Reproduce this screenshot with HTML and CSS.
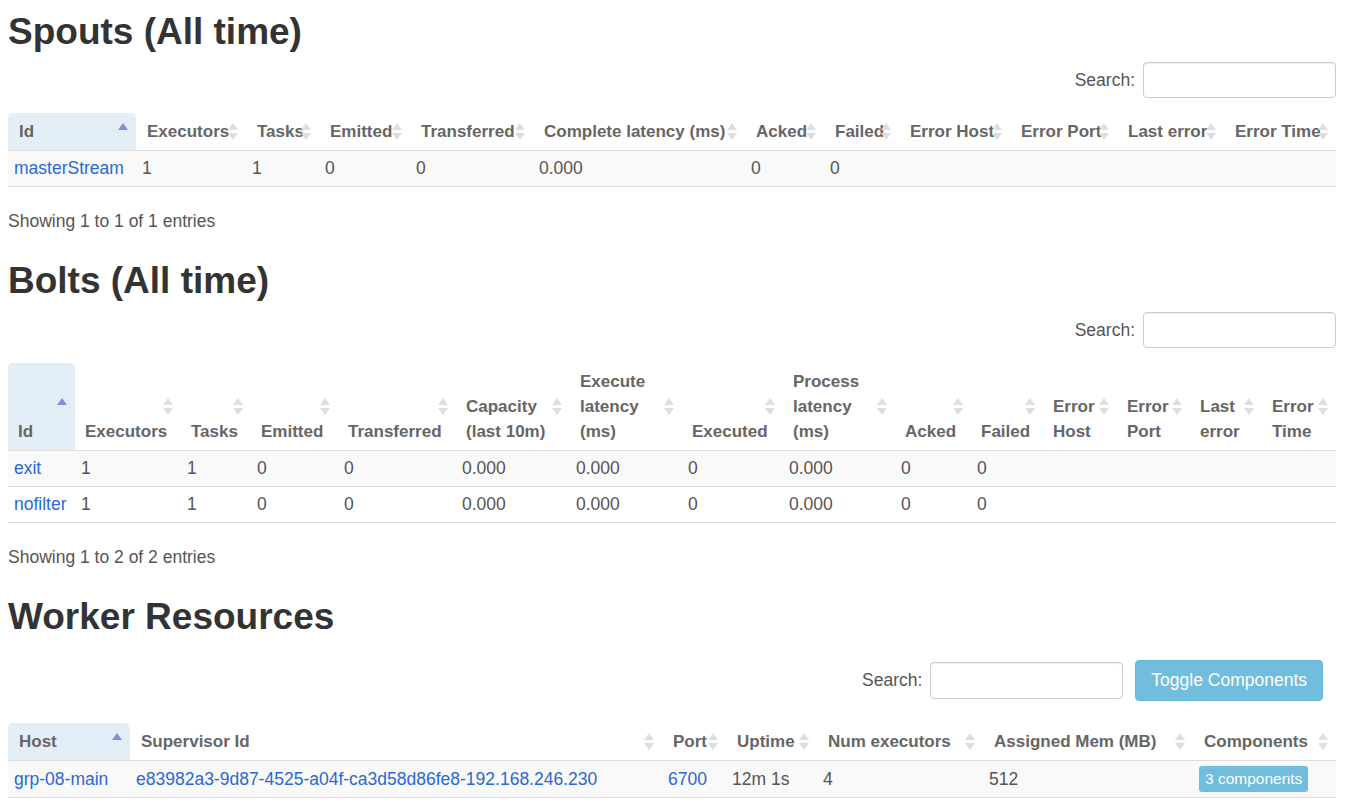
FILE: index.html
```html
<!DOCTYPE html>
<html>
<head>
<meta charset="utf-8">
<title>Topology</title>
<link rel="stylesheet" href="styles.css">
</head>
<body>
<div class="page">
  <section class="block">
    <h2 class="title">Spouts (All time)</h2>
    <div class="toolbar">
      <label class="search">Search: <input class="search-input" type="text"></label>
    </div>
    <table class="grid grid-spouts">
      <colgroup>
        <col class="c1"><col class="c2"><col class="c3"><col class="c4"><col class="c5"><col class="c6"><col class="c7"><col class="c8"><col class="c9"><col class="c10"><col class="c11"><col class="c12">
      </colgroup>
      <thead>
        <tr>
          <th class="asc">Id</th>
          <th class="sort">Executors</th>
          <th class="sort">Tasks</th>
          <th class="sort">Emitted</th>
          <th class="sort">Transferred</th>
          <th class="sort">Complete latency (ms)</th>
          <th class="sort">Acked</th>
          <th class="sort">Failed</th>
          <th class="sort">Error Host</th>
          <th class="sort">Error Port</th>
          <th class="sort">Last error</th>
          <th class="sort">Error Time</th>
        </tr>
      </thead>
      <tbody>
        <tr class="odd">
          <td><a href="#">masterStream</a></td><td>1</td><td>1</td><td>0</td><td>0</td><td>0.000</td><td>0</td><td>0</td><td></td><td></td><td></td><td></td>
        </tr>
      </tbody>
    </table>
    <div class="info">Showing 1 to 1 of 1 entries</div>
  </section>

  <section class="block">
    <h2 class="title">Bolts (All time)</h2>
    <div class="toolbar">
      <label class="search">Search: <input class="search-input" type="text"></label>
    </div>
    <table class="grid grid-bolts">
      <colgroup>
        <col class="c1"><col class="c2"><col class="c3"><col class="c4"><col class="c5"><col class="c6"><col class="c7"><col class="c8"><col class="c9"><col class="c10"><col class="c11"><col class="c12"><col class="c13"><col class="c14"><col class="c15">
      </colgroup>
      <thead>
        <tr>
          <th class="asc">Id</th>
          <th class="sort">Executors</th>
          <th class="sort">Tasks</th>
          <th class="sort">Emitted</th>
          <th class="sort">Transferred</th>
          <th class="sort">Capacity (last 10m)</th>
          <th class="sort">Execute latency (ms)</th>
          <th class="sort">Executed</th>
          <th class="sort">Process latency (ms)</th>
          <th class="sort">Acked</th>
          <th class="sort">Failed</th>
          <th class="sort">Error Host</th>
          <th class="sort">Error Port</th>
          <th class="sort">Last error</th>
          <th class="sort">Error Time</th>
        </tr>
      </thead>
      <tbody>
        <tr class="odd">
          <td><a href="#">exit</a></td><td>1</td><td>1</td><td>0</td><td>0</td><td>0.000</td><td>0.000</td><td>0</td><td>0.000</td><td>0</td><td>0</td><td></td><td></td><td></td><td></td>
        </tr>
        <tr>
          <td><a href="#">nofilter</a></td><td>1</td><td>1</td><td>0</td><td>0</td><td>0.000</td><td>0.000</td><td>0</td><td>0.000</td><td>0</td><td>0</td><td></td><td></td><td></td><td></td>
        </tr>
      </tbody>
    </table>
    <div class="info">Showing 1 to 2 of 2 entries</div>
  </section>

  <section class="block">
    <h2 class="title">Worker Resources</h2>
    <div class="toolbar toolbar-worker">
      <label class="search">Search: <input class="search-input search-input-worker" type="text"></label>
      <button class="btn-info" type="button">Toggle Components</button>
    </div>
    <table class="grid grid-worker">
      <colgroup>
        <col class="c1"><col class="c2"><col class="c3"><col class="c4"><col class="c5"><col class="c6"><col class="c7">
      </colgroup>
      <thead>
        <tr>
          <th class="asc">Host</th>
          <th class="sort">Supervisor Id</th>
          <th class="sort">Port</th>
          <th class="sort">Uptime</th>
          <th class="sort">Num executors</th>
          <th class="sort">Assigned Mem (MB)</th>
          <th class="sort">Components</th>
        </tr>
      </thead>
      <tbody>
        <tr class="odd">
          <td><a href="#">grp-08-main</a></td>
          <td><a href="#">e83982a3-9d87-4525-a04f-ca3d58d86fe8-192.168.246.230</a></td>
          <td><a href="#">6700</a></td>
          <td>12m 1s</td>
          <td>4</td>
          <td>512</td>
          <td><span class="badge">3 components</span></td>
        </tr>
      </tbody>
    </table>
  </section>
</div>
</body>
</html>
```

FILE: styles.css
```css
html, body {
  margin: 0;
  padding: 0;
  background: #fff;
}

body {
  font-family: "Liberation Sans", Arial, sans-serif;
  font-size: 17.5px;
  line-height: 25px;
  color: #555;
}

.page {
  padding: 0 10px 0 8px;
}

.title {
  margin: 12px 0 0;
  font-size: 37px;
  line-height: 40px;
  font-weight: bold;
  color: #333;
}

.toolbar {
  display: flex;
  justify-content: flex-end;
  align-items: center;
  margin-top: 10px;
  margin-bottom: 15px;
}

.block + .block .toolbar {
  margin-top: 11px;
}

.block + .block .toolbar-worker {
  margin-top: 23px;
  margin-bottom: 22px;
  padding-right: 13px;
  gap: 12px;
}

.search {
  display: flex;
  align-items: center;
  gap: 8px;
  color: #555;
}

.search-input {
  box-sizing: border-box;
  width: 193px;
  height: 36px;
  margin: 0;
  border: 1px solid #ccc;
  border-radius: 4px;
  box-shadow: inset 0 1px 1px rgba(0, 0, 0, 0.075);
  font: inherit;
  padding: 0 10px;
}

.search-input-worker {
  height: 37px;
}

.btn-info {
  box-sizing: border-box;
  height: 41px;
  padding: 0 15px;
  border: 1px solid #6ab8d9;
  border-radius: 4px;
  background: #70bddd;
  color: #fff;
  font-family: inherit;
  font-size: 17.5px;
  line-height: 25px;
}

.grid {
  width: 100%;
  border-collapse: collapse;
  border-spacing: 0;
  table-layout: fixed;
}

.grid th {
  position: relative;
  text-align: left;
  vertical-align: bottom;
  font-size: 17px;
  font-weight: bold;
  line-height: 25px;
  color: #666;
  padding: 6px 13px 6px 11px;
  border-bottom: 1px solid #ddd;
  white-space: nowrap;
}

.grid-bolts th {
  white-space: normal;
  padding-left: 10px;
}

.grid th.asc {
  background: #e4eef6;
  border-radius: 5px 5px 0 0;
}

.grid th.sort::before,
.grid th.sort::after {
  content: "";
  position: absolute;
  right: 8px;
  width: 0;
  height: 0;
  border-left: 5px solid transparent;
  border-right: 5px solid transparent;
}

.grid th.sort::before {
  top: 50%;
  margin-top: -9px;
  border-bottom: 7px solid #dedede;
}

.grid th.sort::after {
  top: 50%;
  margin-top: 1px;
  border-top: 7px solid #dedede;
}

.grid th.asc::before {
  content: "";
  position: absolute;
  right: 8px;
  top: 50%;
  margin-top: -9px;
  width: 0;
  height: 0;
  border-left: 5px solid transparent;
  border-right: 5px solid transparent;
  border-bottom: 7px solid #8a8ada;
}

.grid td {
  padding: 5px 6px;
  line-height: 25px;
  border-bottom: 1px solid #ddd;
  white-space: nowrap;
  overflow: visible;
}

.grid tr.odd td {
  background: #f9f9f9;
}

.grid a {
  color: #2a68d4;
  text-decoration: none;
}

.info {
  padding-top: 22px;
  padding-bottom: 15px;
  color: #555;
}

.badge {
  display: inline-block;
  vertical-align: middle;
  padding: 3px 6px;
  line-height: 20px;
  font-size: 15.5px;
  color: #fff;
  background: #70bddd;
  border-radius: 3px;
}

/* column widths: spouts */
.grid-spouts .c1 { width: 128px; }
.grid-spouts .c2 { width: 110px; }
.grid-spouts .c3 { width: 73px; }
.grid-spouts .c4 { width: 91px; }
.grid-spouts .c5 { width: 123px; }
.grid-spouts .c6 { width: 212px; }
.grid-spouts .c7 { width: 79px; }
.grid-spouts .c8 { width: 75px; }
.grid-spouts .c9 { width: 111px; }
.grid-spouts .c10 { width: 107px; }
.grid-spouts .c11 { width: 107px; }
.grid-spouts .c12 { width: 112px; }

/* column widths: bolts */
.grid-bolts .c1 { width: 67px; }
.grid-bolts .c2 { width: 106px; }
.grid-bolts .c3 { width: 70px; }
.grid-bolts .c4 { width: 87px; }
.grid-bolts .c5 { width: 118px; }
.grid-bolts .c6 { width: 114px; }
.grid-bolts .c7 { width: 112px; }
.grid-bolts .c8 { width: 101px; }
.grid-bolts .c9 { width: 112px; }
.grid-bolts .c10 { width: 76px; }
.grid-bolts .c11 { width: 72px; }
.grid-bolts .c12 { width: 74px; }
.grid-bolts .c13 { width: 73px; }
.grid-bolts .c14 { width: 72px; }
.grid-bolts .c15 { width: 74px; }

/* column widths: worker resources */
.grid-worker .c1 { width: 122px; }
.grid-worker .c2 { width: 532px; }
.grid-worker .c3 { width: 64px; }
.grid-worker .c4 { width: 91px; }
.grid-worker .c5 { width: 166px; }
.grid-worker .c6 { width: 210px; }
.grid-worker .c7 { width: 143px; }
```
